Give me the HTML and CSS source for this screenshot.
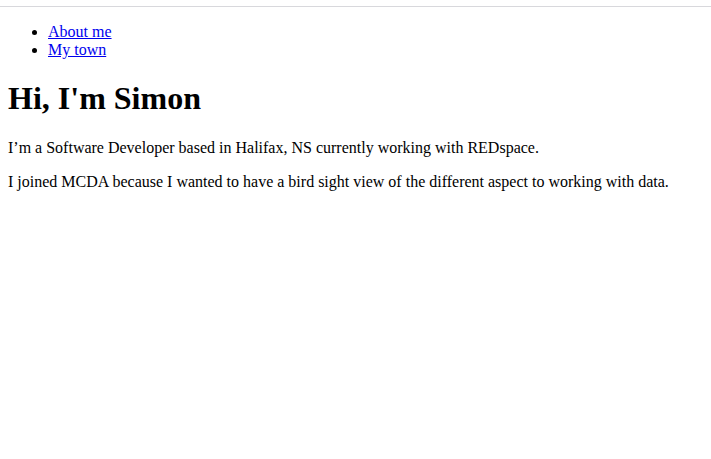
FILE: index.html
```html
<!DOCTYPE html>
<html lang="en">
<head>
<meta charset="utf-8">
<title>Simon</title>
<link rel="stylesheet" href="styles.css">
</head>
<body>
<div class="page">
<div class="topline"></div>
<ul class="nav">
  <li><a href="#about">About me</a></li>
  <li><a href="#town">My town</a></li>
</ul>
<h1 class="title">Hi, I'm Simon</h1>
<p class="text">I’m a Software Developer based in Halifax, NS currently working with REDspace.</p>
<p class="text">I joined MCDA because I wanted to have a bird sight view of the different aspect to working with data.</p>
</div>
</body>
</html>
```
FILE: styles.css
```css
html, body {
  background: #fff;
}
body {
  margin: 0;
  font-family: "Liberation Serif", "Times New Roman", serif;
  font-size: 16px;
  color: #000;
}
.page {
  padding: 6px 8px 8px;
}
.topline {
  border-top: 1px solid #d8d8dc;
  margin: 0 -8px;
}
.nav {
  margin: 16px 0 16px;
  padding-left: 40px;
}
.nav a {
  color: #0000ee;
}
.title {
  font-size: 2em;
  margin: 0.67em 0;
}
.text {
  margin: 1em 0;
}
```
